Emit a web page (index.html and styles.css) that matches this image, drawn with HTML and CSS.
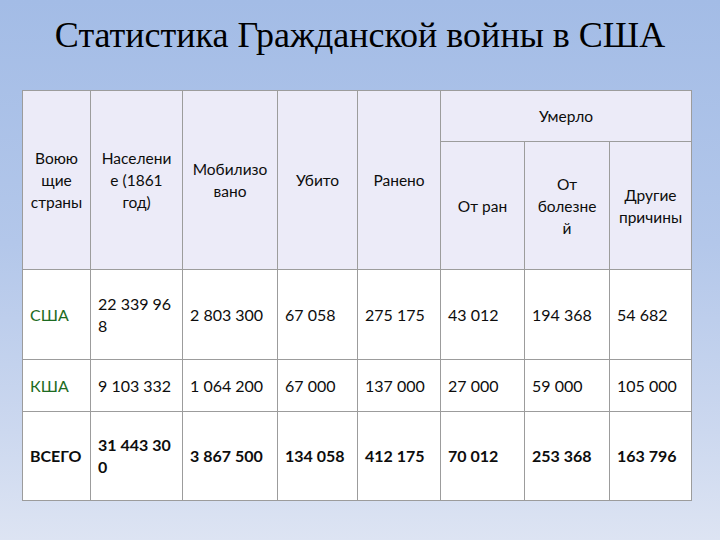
FILE: index.html
```html
<!DOCTYPE html>
<html lang="ru">
<head>
<meta charset="utf-8">
<title>Статистика Гражданской войны в США</title>
<link rel="stylesheet" href="styles.css">
</head>
<body>
<div class="slide">
  <h1 class="title">Статистика Гражданской войны в США</h1>
  <table class="stats">
    <colgroup>
      <col class="c1"><col class="c2"><col class="c3"><col class="c4">
      <col class="c5"><col class="c6"><col class="c7"><col class="c8">
    </colgroup>
    <thead>
      <tr class="h1row">
        <th rowspan="2">Воюю<br>щие<br>страны</th>
        <th rowspan="2">Населени<br>е (1861<br>год)</th>
        <th rowspan="2">Мобилизо<br>вано</th>
        <th rowspan="2">Убито</th>
        <th rowspan="2">Ранено</th>
        <th colspan="3">Умерло</th>
      </tr>
      <tr class="h2row">
        <th class="low">От ран</th>
        <th class="low">От<br>болезне<br>й</th>
        <th class="low">Другие<br>причины</th>
      </tr>
    </thead>
    <tbody>
      <tr class="r1">
        <td class="country">США</td>
        <td>22 339 96<br>8</td>
        <td>2 803 300</td>
        <td>67 058</td>
        <td>275 175</td>
        <td>43 012</td>
        <td>194 368</td>
        <td>54 682</td>
      </tr>
      <tr class="r2">
        <td class="country">КША</td>
        <td>9 103 332</td>
        <td>1 064 200</td>
        <td>67 000</td>
        <td>137 000</td>
        <td>27 000</td>
        <td>59 000</td>
        <td>105 000</td>
      </tr>
      <tr class="r3 total">
        <td>ВСЕГО</td>
        <td>31 443 30<br>0</td>
        <td>3 867 500</td>
        <td>134 058</td>
        <td>412 175</td>
        <td>70 012</td>
        <td>253 368</td>
        <td>163 796</td>
      </tr>
    </tbody>
  </table>
</div>
</body>
</html>
```
FILE: styles.css
```css
html, body {
  margin: 0;
  padding: 0;
}
.slide {
  width: 720px;
  height: 540px;
  overflow: hidden;
  background: linear-gradient(to bottom, #a3bce6 0%, #b3c7ea 45%, #ccd8ef 80%, #dde4f3 100%);
  box-sizing: border-box;
  padding-top: 15px;
}
.title {
  margin: 0 0 35px 0;
  font-family: "Liberation Serif", "Times New Roman", serif;
  font-weight: 400;
  font-size: 36px;
  line-height: 40px;
  text-align: center;
  color: #000;
}
.stats {
  margin-left: 22px;
  border-collapse: collapse;
  table-layout: fixed;
  width: 669px;
  font-family: Lato, "Liberation Sans", sans-serif;
  color: #0d0d0d;
}
.c1 { width: 68px; }
.c2 { width: 92px; }
.c3 { width: 95px; }
.c4 { width: 80px; }
.c5 { width: 83px; }
.c6 { width: 84px; }
.c7 { width: 85px; }
.c8 { width: 82px; }
.stats th, .stats td {
  border: 1px solid #9c9c9c;
  padding: 0;
  vertical-align: middle;
}
.stats th {
  background: #ecebf8;
  font-weight: normal;
  font-size: 15.5px;
  line-height: 22px;
  text-align: center;
}
.h1row { height: 51px; }
.h2row { height: 128px; }
.stats td {
  background: #fff;
  font-size: 16px;
  line-height: 22px;
  text-align: left;
  padding-left: 7px;
}
.r1 { height: 90px; }
.r2 { height: 52px; }
.r3 { height: 89px; }
.country {
  color: #1d6b22;
}
.total td {
  font-weight: bold;
}
```
